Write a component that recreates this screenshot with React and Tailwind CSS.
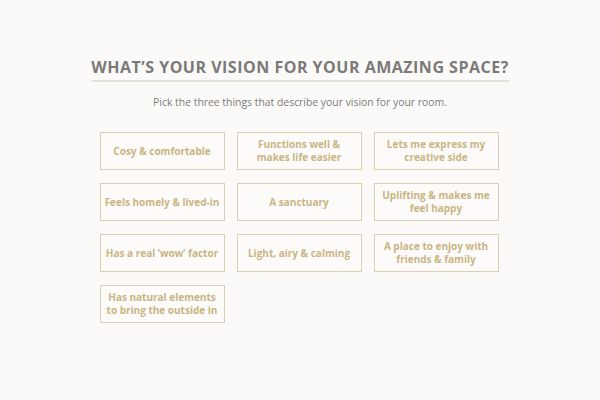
import React from 'react';

const options = [
    ['Cosy & comfortable'],
    ['Functions well &', 'makes life easier'],
    ['Lets me express my', 'creative side'],
    ['Feels homely & lived-in'],
    ['A sanctuary'],
    ['Uplifting & makes me', 'feel happy'],
    ["Has a real \u2018wow\u2019 factor"],
    ['Light, airy & calming'],
    ['A place to enjoy with', 'friends & family'],
    ['Has natural elements', 'to bring the outside in'],
];

const OptionCard = ({ lines }) => (
    <button className="h-[38px] border border-[#dcd0b2] bg-[#fcfbf9] text-[10px] font-bold leading-[13px] text-[#c9b584] text-center whitespace-nowrap flex flex-col items-center justify-center">
        {lines.map(l => (
            <span key={l}>{l}</span>
        ))}
    </button>
);

export default function App() {
    return (
        <div className="w-[600px] h-[400px] bg-[#fbfaf8] flex flex-col items-center pt-[57px]" style={{ fontFamily: '"Open Sans", sans-serif' }}>
            {/* heading */}
            <h1 className="text-[16px] font-bold tracking-[0.5px] text-[#7b7a78] leading-[20px]">
                WHAT’S YOUR VISION FOR YOUR AMAZING SPACE?
            </h1>
            <div className="w-[417px] h-[2px] bg-[#e3e0d9] mt-[3px]" />
            <p className="mt-[13px] text-[10.4px] text-[#7d7c7a] leading-[14px]">
                Pick the three things that describe your vision for your room.
            </p>

            {/* options */}
            <div className="grid grid-cols-[125px_125px_125px] gap-x-[12px] gap-y-[13px] mt-[23px] -ml-[2px]">
                {options.map(opt => (
                    <OptionCard key={opt[0]} lines={opt} />
                ))}
            </div>
        </div>
    );
}
